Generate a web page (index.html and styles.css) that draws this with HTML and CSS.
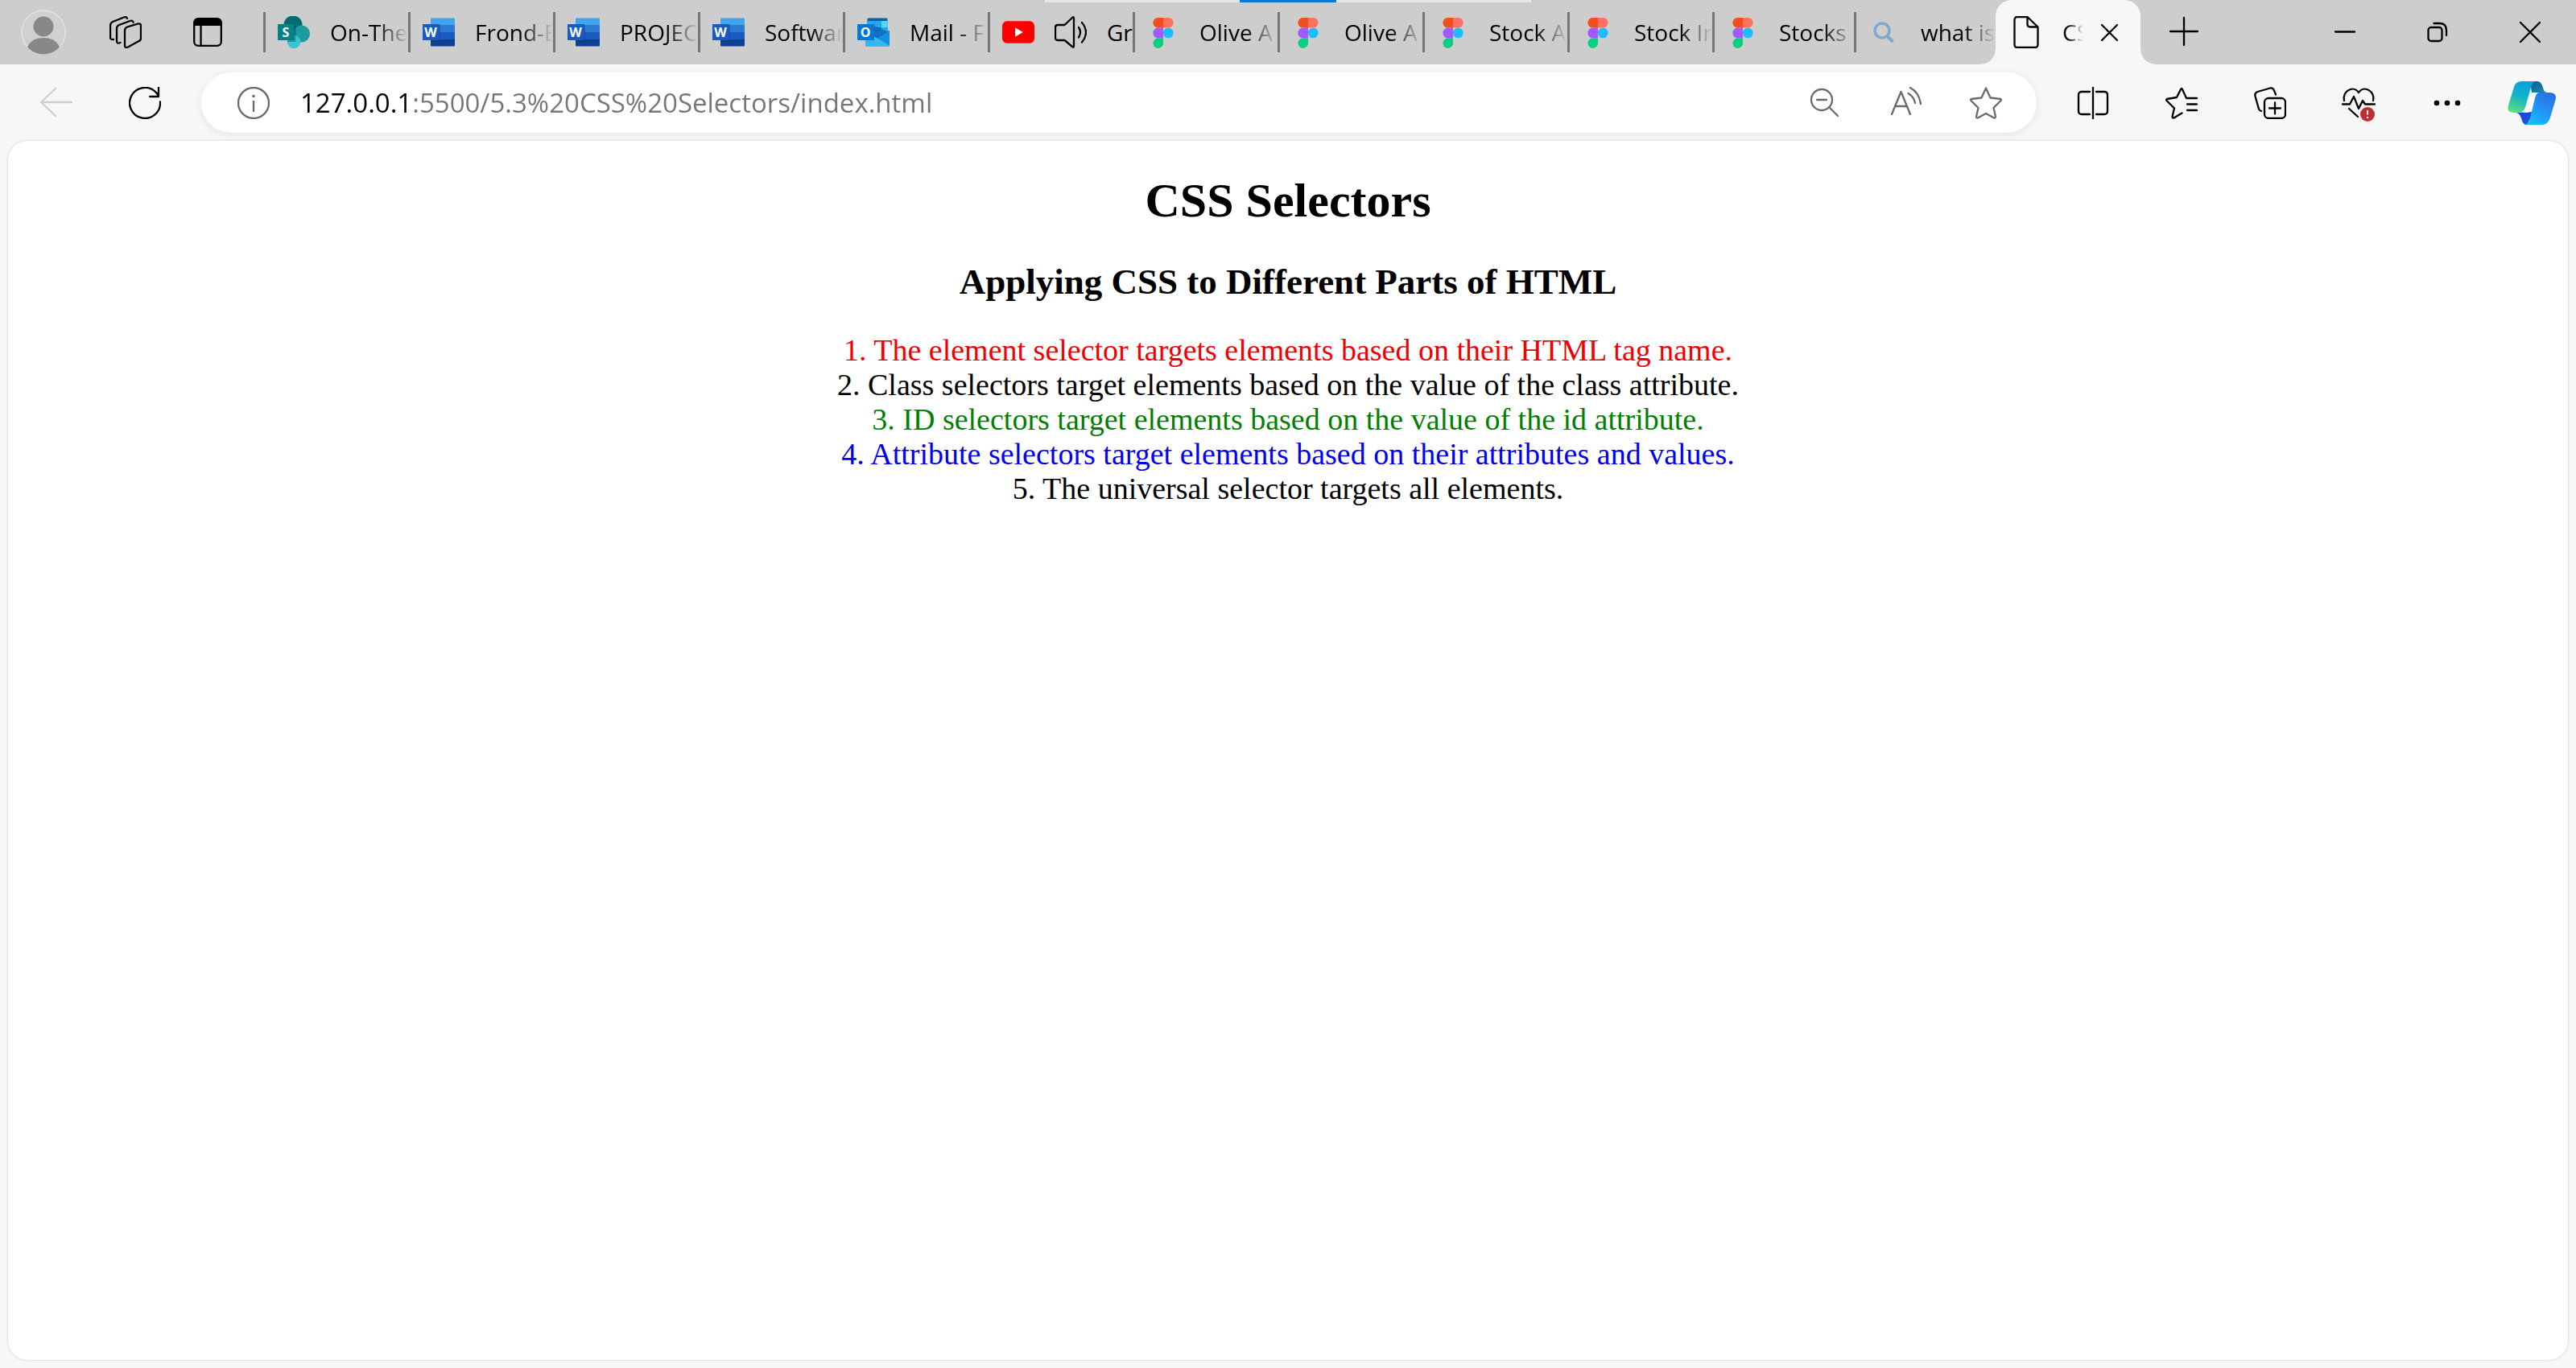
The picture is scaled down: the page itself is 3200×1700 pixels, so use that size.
FILE: index.html
```html
<!DOCTYPE html>
<html lang="en">
<head>
<meta charset="utf-8">
<meta name="viewport" content="width=device-width, initial-scale=1">
<title>CSS Selectors</title>
<link rel="stylesheet" href="styles.css">
</head>
<body>
<svg class="sprite" aria-hidden="true">
  <symbol id="word" viewBox="0 0 40 40">
    <path fill="#41a5ee" d="M10 3.500a1 1 0 0 1 1-1h28a1 1 0 0 1 1 1V11H10z"/>
    <path fill="#2b7cd3" d="M10 11h30v9H10z"/>
    <path fill="#185abd" d="M10 20h30v9H10z"/>
    <path fill="#103f91" d="M10 29h30v7.500a1 1 0 0 1-1 1H11a1 1 0 0 1-1-1z"/>
    <path fill="#0b3a86" opacity=".4" d="M10 11h12v21H10z"/>
    <rect y="10" width="21" height="20" rx="1" fill="#185abd"/>
    <text x="10" y="26" class="glyph">W</text>
  </symbol>
  <symbol id="figma" viewBox="0 0 40 40">
    <path fill="#f24e1e" d="M20 2h-6.300a6.300 6.300 0 0 0 0 12.600H20z"/>
    <path fill="#ff7262" d="M20 2h6.300a6.300 6.300 0 0 1 0 12.600H20z"/>
    <path fill="#a259ff" d="M20 14.600h-6.300a6.300 6.300 0 0 0 0 12.700H20z"/>
    <circle cx="26.300" cy="21" r="6.300" fill="#1abcfe"/>
    <path fill="#0acf83" d="M20 27.300h-6.300A6.300 6.300 0 1 0 20 33.700z"/>
  </symbol>
</svg>

<header class="tabstrip">
  <div class="share-bar"><span class="share-grip"></span></div>
  <div class="tools">
    <button class="btn tool" aria-label="Profile">
      <svg class="avatar" viewBox="0 0 56 56"><circle cx="28" cy="28" r="27" fill="#d2d0ce" stroke="#e4e2e0" stroke-width="1.500"/><circle cx="28" cy="21" r="12.500" fill="#8a8886"/><path fill="#8a8886" d="M8 46.500C12 38 19 35 28 35s16 3 20 11.500C43 52 36 55.500 28 55.500S13 52 8 46.500z"/></svg>
    </button>
    <button class="btn tool" aria-label="Workspaces">
      <svg class="icon" viewBox="0 0 40 40"><g class="line"><path d="M22 13.500 35 9.600q4-1 4 2.500v15.500q0 2.500-2.500 3.500L23 38.500q-4 1.500-4-2V18q0-3.300 3-4.500z"/><path d="M29.500 8q0-3-4-2L12 11q-3 1.500-3 4v16q0 4 4.500 2"/><path d="M22 3q-1-3-4-1.500L4 7q-3 1.500-3 4.500v15q0 3 4 2.500"/></g></svg>
    </button>
    <button class="btn tool" aria-label="Tab actions">
      <svg class="icon" viewBox="0 0 40 40"><rect x="3.200" y="3.200" width="33.600" height="33.600" rx="5" class="line"/><path d="M3 12V8q0-5 5-5h24q5 0 5 5v4z"/><path d="M11.500 11v26" class="line"/></svg>
    </button>
  </div>

  <ul class="tabs">
    <li class="tab"><button class="btn tab-btn">
      <svg class="icon" viewBox="0 0 40 40"><circle cx="19" cy="11" r="11.500" fill="#036c70"/><circle cx="29.500" cy="22" r="10.500" fill="#1a9ba1"/><circle cx="20" cy="32" r="8.200" fill="#37c6d0"/><path d="M9 12h13.500v20H12z" opacity=".25"/><rect y="10" width="20.500" height="20" rx="1" fill="#038387"/><text x="10" y="26" class="glyph">S</text></svg>
      <span class="title">On-The</span></button></li>
    <li class="tab"><button class="btn tab-btn"><svg class="icon"><use href="#word"/></svg><span class="title">Frond-E</span></button></li>
    <li class="tab"><button class="btn tab-btn"><svg class="icon"><use href="#word"/></svg><span class="title">PROJEC</span></button></li>
    <li class="tab"><button class="btn tab-btn"><svg class="icon"><use href="#word"/></svg><span class="title">Softwar</span></button></li>
    <li class="tab"><button class="btn tab-btn">
      <svg class="icon" viewBox="0 0 40 40"><path fill="#0f5fa8" d="M12.500 3.500q0-1 1-1h23q1 0 1 1V20h-25z"/><path fill="#28a8ea" d="M12.500 6h9v8h-9z"/><path fill="#0078d4" d="M12.500 14h9v8h-9z"/><path fill="#50d9ff" d="M29.500 6h8v8h-8z"/><path fill="#28a8ea" d="M21.500 6h8v8h-8zM29.500 14h8v8h-8z"/><path fill="#1490df" d="M10 20 40 18v18.500q0 1-1 1H11q-1 0-1-1z"/><path fill="#0a4f94" d="m10 18 15 9 15-9-15 8z"/><path fill="#0f6cbd" d="M21 12 37.500 19 25 26.500 15 21z" opacity=".8"/><path fill="#35b8f1" d="m10 19 30 17.500q0 1-1 1H11q-1 0-1-1z"/><rect y="10" width="21" height="20" rx="1" fill="#0078d4"/><text x="10" y="26" class="glyph">O</text></svg>
      <span class="title">Mail - F</span></button></li>
    <li class="tab"><button class="btn tab-btn">
      <svg class="icon" viewBox="0 0 40 40"><rect y="6.300" width="40" height="27.500" rx="6" fill="#f00"/><path fill="#fff" d="M16 14.200 26 20l-10 5.800z"/></svg>
      <svg class="icon" viewBox="0 0 40 40"><g class="line"><path d="M24 3v34q0 3-2 1L12.500 30H4q-3 0-3-3V14q0-3 3-3h8.500L22 2q2-2 2 1z"/><path d="M30 14q4 6 0 12.500M34 8q10 12 0 24.500"/></g></svg>
      <span class="title title-sharp">Gr</span></button></li>
    <li class="tab"><button class="btn tab-btn"><svg class="icon"><use href="#figma"/></svg><span class="title">Olive A</span></button></li>
    <li class="tab"><button class="btn tab-btn"><svg class="icon"><use href="#figma"/></svg><span class="title">Olive A</span></button></li>
    <li class="tab"><button class="btn tab-btn"><svg class="icon"><use href="#figma"/></svg><span class="title">Stock A</span></button></li>
    <li class="tab"><button class="btn tab-btn"><svg class="icon"><use href="#figma"/></svg><span class="title">Stock In</span></button></li>
    <li class="tab tab-narrow"><button class="btn tab-btn"><svg class="icon"><use href="#figma"/></svg><span class="title">Stocks</span></button></li>
    <li class="tab tab-narrow"><button class="btn tab-btn">
      <svg class="icon" viewBox="0 0 40 40"><g fill="none" stroke="#80a7cc"><circle cx="17" cy="18" r="9" stroke-width="3.500"/><path d="m23 24.500 7.500 7.500" stroke-width="4"/></g></svg>
      <span class="title">what is</span></button></li>
    <li class="tab tab-active" aria-current="page">
      <svg class="icon" viewBox="0 0 40 40"><path class="line" d="M9 1h12.500L34.500 13.500V35q0 4-4 4H9q-3.500 0-3.500-4V5q0-4 3.500-4zM21.500 1v9q0 3.500 3.500 3.500h9.500"/></svg>
      <span class="title title-active">CS</span>
      <button class="btn tab-close" aria-label="Close tab"><svg class="icon" viewBox="0 0 40 40"><path class="line" d="m10 11 19 19M29 11 10 30"/></svg></button>
    </li>
  </ul>
  <button class="btn new-tab" aria-label="New tab"><svg class="icon" viewBox="0 0 40 40"><path class="line" d="M20 2v34M3 19h34"/></svg></button>

  <div class="window-controls">
    <button class="btn window-btn" aria-label="Minimize"><svg class="icon" viewBox="0 0 40 40"><path class="line" d="M8 19.500h24"/></svg></button>
    <button class="btn window-btn" aria-label="Restore"><svg class="icon" viewBox="0 0 40 40"><g class="line"><rect x="8.500" y="14" width="17" height="17" rx="3.500"/><path d="M15.500 9h7q8.500 0 8.500 8.500V24"/></g></svg></button>
    <button class="btn window-btn" aria-label="Close"><svg class="icon" viewBox="0 0 40 40"><path class="line" d="m8 8 24 24M32 8 8 32"/></svg></button>
  </div>
</header>

<nav class="toolbar">
  <button class="btn nav-btn nav-disabled" aria-label="Back"><svg class="icon" viewBox="0 0 40 40"><path class="line" d="M39 19H1M19 2 1 19l18 17"/></svg></button>
  <button class="btn nav-btn" aria-label="Refresh"><svg class="icon" viewBox="0 0 40 40"><path class="line" d="M39 18.500A19 19 0 1 1 34 7l3 4M37 1v11H26"/></svg></button>

  <form class="omnibox">
    <button type="button" class="btn omni-btn" aria-label="Site information"><svg class="icon" viewBox="0 0 40 40"><circle cx="20" cy="20" r="19" class="line"/><path class="line" d="M20 18v12"/><circle cx="20" cy="11.500" r="1.800"/></svg></button>
    <input class="url" type="text" aria-label="Address" value="127.0.0.1:5500/5.3%20CSS%20Selectors/index.html">
    <button type="button" class="btn omni-btn" aria-label="Zoom out"><svg class="icon" viewBox="0 0 40 40"><g class="line"><circle cx="16" cy="16" r="13"/><path d="m25 25 11 11M10 16h12"/></g></svg></button>
    <button type="button" class="btn omni-btn" aria-label="Read aloud"><svg class="icon" viewBox="0 0 40 40"><path class="line" d="M3 34 14.500 6 26 34M7 24h15M23.500 8q7 4 8.500 12M26 1q11 6 13 20"/></svg></button>
    <button type="button" class="btn omni-btn" aria-label="Add to favorites"><svg class="icon" viewBox="0 0 40 40"><path class="line" d="M20 1.500 25.500 13.500 38 15q2 .5.500 2L29.500 26 32 37q0 2-2 1.500L20 33 10 38.500q-2 .5-2-1.500l2.500-11L1.500 17Q0 15.500 2 15l12.500-1.500z"/></svg></button>
  </form>

  <button class="btn nav-btn" aria-label="Split screen"><svg class="icon" viewBox="0 0 40 40"><path class="line" d="M20 1v38M16 6H6Q2 6 2 10v20q0 4 4 4h10M24 6h10q4 0 4 4v20q0 4-4 4H24"/></svg></button>
  <button class="btn nav-btn" aria-label="Favorites"><svg class="icon" viewBox="0 0 40 40"><path class="line" d="M39 14H26L21 3q-1-2-2 0l-5 10-12 2q-2 1 0 2.500l9 9L8.500 37q0 2 2 1.500l10-6M27 21.500h12M27 29h12"/></svg></button>
  <button class="btn nav-btn" aria-label="Collections"><svg class="icon" viewBox="0 0 40 40"><g class="line"><rect x="13" y="14" width="26" height="25" rx="5"/><path d="M26 19.500v14M19 26.500h14M27 9.500l-2-5Q23.500.500 20 1.500L4.500 6Q.500 7.500 1.500 11.500L6 27.500q1 2 3 2.500"/></g></svg></button>
  <button class="btn nav-btn" aria-label="Browser essentials"><svg class="icon icon-alert" viewBox="0 0 40 40"><path class="line" d="M2 17C-1 6 13-3 20 7c7-10 21-1 18 10M0 21.500h9L14 12l6 15 5-10 3 4.500h12M8 27l11 10"/><circle cx="31" cy="34" r="9" fill="#bc2f32"/><path d="M31 29v5.500M31 37v2" stroke="#fff" stroke-width="2"/></svg></button>
  <button class="btn nav-btn" aria-label="Settings and more"><svg class="icon" viewBox="0 0 40 40"><circle cx="7" cy="20" r="3.300"/><circle cx="20" cy="20" r="3.300"/><circle cx="33" cy="20" r="3.300"/></svg></button>
  <button class="btn nav-btn nav-copilot" aria-label="Copilot">
    <svg class="copilot" viewBox="0 0 60 56">
      <defs>
        <linearGradient id="cg" x1=".6" y1="0" x2=".3" y2="1"><stop offset="0" stop-color="#0a9fe0"/><stop offset=".5" stop-color="#14b3c4"/><stop offset="1" stop-color="#5ae080"/></linearGradient>
        <linearGradient id="cb" x1=".8" y1="0" x2=".3" y2="1"><stop offset="0" stop-color="#2a6fe0"/><stop offset=".5" stop-color="#2390f5"/><stop offset="1" stop-color="#12c0f8"/></linearGradient>
        <linearGradient id="cd" x1="0" y1="0" x2="1" y2="1"><stop offset="0" stop-color="#0a5a80"/><stop offset="1" stop-color="#1a8fc8"/></linearGradient>
        <linearGradient id="cf" x1="0" y1="0" x2="1" y2="1"><stop offset="0" stop-color="#1b3fd0"/><stop offset="1" stop-color="#1560e8"/></linearGradient>
      </defs>
      <path fill="url(#cd)" d="M28 1h8q5 0 7 5l2 6q1 3 5 3H30z"/>
      <path fill="url(#cf)" d="M10 40q5 0 7 7l1 3q1.500 5 6 5l9-16z"/>
      <path fill="url(#cg)" d="M18 1h17q-4 1-5.500 6L22 33q-2 7-9 7H8Q-1.500 40 1 31L8 8q2-7 10-7z"/>
      <path fill="#fff" d="M20 40q2-2 3-7l4-12q2-5 8-6h6q-5 1-7 7l-5 14q-1 4-6 4z"/>
      <path fill="url(#cb)" d="M39 15h12q11 0 8.500 9L53 46q-3 9-10 9H22q4-1 5.500-6L34 22q2-7 5-7z"/>
    </svg>
  </button>
</nav>

<main class="page">
  <h1 class="heading">CSS Selectors</h1>
  <h2 class="subheading">Applying CSS to Different Parts of HTML</h2>
  <div class="notes">
    <p class="note note-red">1. The element selector targets elements based on their HTML tag name.</p>
    <p class="note">2. Class selectors target elements based on the value of the class attribute.</p>
    <p class="note note-green">3. ID selectors target elements based on the value of the id attribute.</p>
    <p class="note note-blue">4. Attribute selectors target elements based on their attributes and values.</p>
    <p class="note">5. The universal selector targets all elements.</p>
  </div>
</main>
</body>
</html>
```
FILE: styles.css
```css
* {
  box-sizing: border-box;
}

body {
  margin: 0;
  min-height: 100vh;
  display: flex;
  flex-direction: column;
  background: #f7f7f7;
  color: #000;
  font-family: "Open Sans", "Noto Sans", sans-serif;
}

.sprite {
  position: absolute;
  width: 0;
  height: 0;
}

.btn {
  display: flex;
  align-items: center;
  justify-content: center;
  flex: none;
  margin: 0;
  padding: 0;
  border: 0;
  background: none;
  color: inherit;
  font: inherit;
}

.icon {
  flex: none;
  width: 40px;
  height: 40px;
  fill: currentColor;
}

.icon-alert {
  overflow: visible;
}

.line {
  fill: none;
  stroke: currentColor;
  stroke-width: 2.3;
  stroke-linecap: round;
  stroke-linejoin: round;
}

.glyph {
  fill: #fff;
  font: bold 16px "Open Sans", sans-serif;
  text-anchor: middle;
}

/* Tab strip */
.tabstrip {
  position: relative;
  display: flex;
  height: 80px;
  background: #cdcdcd;
}

.share-bar {
  position: absolute;
  top: 0;
  left: 50%;
  width: 604px;
  height: 3px;
  transform: translateX(-50%);
  display: flex;
  justify-content: center;
  background: #e6e6e6;
}

.share-grip {
  width: 120px;
  background: #0078d4;
}

.tools {
  display: flex;
  flex: none;
  gap: 2px;
  padding: 0 19px 0 4px;
}

.tool {
  width: 100px;
}

.avatar {
  width: 56px;
  height: 56px;
}

.tabs {
  display: flex;
  min-width: 0;
  margin: 0;
  padding: 0;
  list-style: none;
  font-size: 28px;
  line-height: 40px;
}

.tab {
  position: relative;
  display: flex;
  align-items: center;
  flex: 0 1 auto;
  width: 180px;
  min-width: 0;
}

.tab-narrow {
  width: 176px;
}

.tab:not(.tab-active)::before {
  content: "";
  flex: none;
  width: 3px;
  height: 50px;
  background: #767676;
}

.tab-btn {
  flex: 1;
  min-width: 0;
  height: 80px;
  padding-left: 15px;
  gap: 25px;
  justify-content: flex-start;
}

.title {
  flex: 1;
  min-width: 0;
  overflow: hidden;
  white-space: nowrap;
  text-align: left;
  -webkit-mask-image: linear-gradient(to left, transparent, #000 40px);
  mask-image: linear-gradient(to left, transparent, #000 40px);
}

.title-sharp {
  -webkit-mask-image: none;
  mask-image: none;
}

.tab-active {
  padding: 0 18px;
  gap: 25px;
  border-radius: 20px 20px 0 0;
  background: #f7f7f7;
}

.tab-active::before,
.tab-active::after {
  content: "";
  position: absolute;
  bottom: 0;
  width: 18px;
  height: 18px;
}

.tab-active::before {
  right: 100%;
  background: radial-gradient(circle at 0 0, transparent 17px, #f7f7f7 18px);
}

.tab-active::after {
  left: 100%;
  background: radial-gradient(circle at 100% 0, transparent 17px, #f7f7f7 18px);
}

.title-active {
  -webkit-mask-image: linear-gradient(to left, transparent, #000 20px);
  mask-image: linear-gradient(to left, transparent, #000 20px);
}

.tab-close {
  margin-left: -12px;
}

.new-tab {
  width: 108px;
}

.window-controls {
  display: flex;
  flex: none;
  margin-left: auto;
}

.window-btn {
  width: 115px;
}

/* Toolbar */
.toolbar {
  display: flex;
  align-items: center;
  padding: 10px 5px 10px 15px;
}

.nav-btn {
  width: 110px;
  height: 75px;
}

.nav-disabled {
  color: #cdcdcd;
}

.nav-copilot {
  width: 100px;
}

.copilot {
  width: 60px;
  height: 56px;
}

.omnibox {
  display: flex;
  align-items: center;
  flex: 1;
  min-width: 0;
  height: 75px;
  margin: 0 15px;
  padding: 0 13px 0 15px;
  border-radius: 38px;
  background: #fff;
  box-shadow: 0 2px 12px rgba(0, 0, 0, 0.08);
  color: #6a6a6a;
}

.omni-btn {
  width: 100px;
  height: 75px;
}

.url {
  flex: 1;
  min-width: 0;
  height: 75px;
  padding: 0 8px;
  border: 0;
  outline: 0;
  background: linear-gradient(to right, #000 147px, #767676 147px);
  -webkit-background-clip: text;
  background-clip: text;
  color: transparent;
  font: 33px "Open Sans", "Noto Sans", sans-serif;
}

/* Page */
.page {
  flex: 1;
  margin: 0 10px 10px;
  padding: 40px 20px;
  border-radius: 24px;
  background: #fff;
  box-shadow: 0 0 3px rgba(0, 0, 0, 0.2);
  font-family: "Liberation Serif", "Times New Roman", serif;
  text-align: center;
}

.heading {
  margin: 0 0 40px;
  font-size: 60px;
  line-height: 69px;
}

.subheading {
  margin: 0 0 38px;
  font-size: 45px;
  line-height: 52px;
}

.note {
  margin: 0;
  font-size: 38px;
  line-height: 43px;
}

.note-red {
  color: #f00000;
}

.note-green {
  color: #008000;
}

.note-blue {
  color: #0000f0;
}
```
